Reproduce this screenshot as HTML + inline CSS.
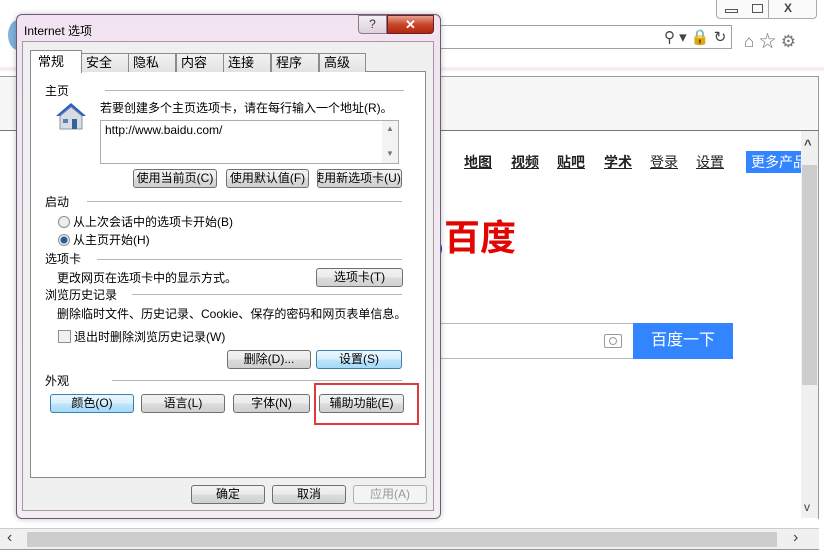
<!DOCTYPE html>
<html><head><meta charset="utf-8"><style>
*{box-sizing:border-box;margin:0;padding:0}
body{width:824px;height:555px;position:relative;overflow:hidden;background:#fff;font-family:"Liberation Sans","Noto Sans CJK SC",sans-serif;font-size:12px;color:#000}
.a{position:absolute}
.btn{position:absolute;height:19px;border:1px solid #707070;border-radius:3px;background:linear-gradient(#f2f2f2,#ebebeb 50%,#dcdcdc 50%,#d0d0d0);font-size:12px;text-align:center;line-height:17px;white-space:nowrap;overflow:hidden}
.blue{border-color:#3c7fb1;background:linear-gradient(#eaf6fd,#d9f0fc 50%,#bee6fd 50%,#a7d9f5)}
.tab{position:absolute;top:53px;height:19px;border:1px solid #898c95;border-bottom:none;background:linear-gradient(#f2f2f2,#e3e3e3);font-size:13px;padding-left:4px;line-height:18px}
.lbl{position:absolute;font-size:12px;white-space:nowrap}
.line{position:absolute;height:1px;background:#b5b5b5}
.nav{position:absolute;top:152px;font-size:14px;text-decoration:underline;color:#222;font-weight:bold}
</style></head><body>
<!-- browser chrome -->
<div class="a" style="left:716px;top:0;width:101px;height:19px;border:1px solid #aaa;border-top:none;border-radius:0 0 4px 4px;background:#fafafa"></div>
<div class="a" style="left:725px;top:9px;width:13px;height:4px;border:1px solid #555"></div>
<div class="a" style="left:752px;top:4px;width:11px;height:9px;border:1px solid #555"></div>
<div class="a" style="left:768px;top:0;width:1px;height:18px;background:#aaa"></div>
<div class="a" style="left:784px;top:1px;font-size:12px;color:#444;font-weight:bold">X</div>
<div class="a" style="left:440px;top:25px;width:292px;height:24px;border:1px solid #a0a0a0;background:#fff"></div>
<div class="a" style="left:664px;top:28px;font-size:15px;color:#444">⚲ ▾ 🔒 ↻</div>
<div class="a" style="left:744px;top:27px;font-size:17px;color:#777">⌂ ☆ ⚙</div>
<div class="a" style="left:0;top:66px;width:824px;height:6px;background:linear-gradient(#fff,#f2e6f0,#fff)"></div>
<div class="a" style="left:0;top:76px;width:819px;height:55px;background:#f7f7f7;border-top:1px solid #999;border-bottom:1px solid #777;border-right:1px solid #999"></div>
<div class="a" style="left:818px;top:131px;width:1px;height:388px;background:#999"></div>
<div class="a" style="left:801px;top:131px;width:17px;height:387px;background:#f0f0f0"></div>
<div class="a" style="left:802px;top:165px;width:15px;height:220px;background:#cdcdcd"></div>
<div class="a" style="left:804px;top:137px;font-size:13px;color:#444;font-weight:bold">^</div>
<div class="a" style="left:804px;top:500px;font-size:12px;color:#444">v</div>
<div class="a" style="left:0;top:528px;width:819px;height:22px;background:#f0f0f0;border-top:1px solid #ccc;border-bottom:1px solid #999"></div>
<div class="a" style="left:27px;top:532px;width:750px;height:15px;background:#cdcdcd"></div>
<div class="a" style="left:7px;top:529px;font-size:16px;color:#444">‹</div>
<div class="a" style="left:793px;top:529px;font-size:16px;color:#444">›</div>
<div class="nav" style="left:464px">地图</div>
<div class="nav" style="left:511px">视频</div>
<div class="nav" style="left:557px">贴吧</div>
<div class="nav" style="left:604px">学术</div>
<div class="nav" style="left:650px;font-weight:normal">登录</div>
<div class="nav" style="left:696px;font-weight:normal">设置</div>
<div class="a" style="left:746px;top:151px;width:55px;height:22px;background:#3385ff;color:#fff;font-size:14px;line-height:22px;padding-left:5px;overflow:hidden;white-space:nowrap">更多产品</div>
<div class="a" style="left:444px;top:216px;font-size:36px;font-weight:bold;color:#e10602;line-height:44px">百度</div>
<div class="a" style="left:434px;top:242px;width:8px;height:14px;border-radius:50%;background:#2932e1"></div>
<div class="a" style="left:438px;top:323px;width:196px;height:36px;border:1px solid #b8b8b8;border-left:none;border-right:none"></div>
<div class="a" style="left:604px;top:334px;width:18px;height:14px;border:1.5px solid #999;border-radius:2px"></div>
<div class="a" style="left:609px;top:337px;width:8px;height:8px;border:1.5px solid #999;border-radius:50%"></div>
<div class="a" style="left:633px;top:323px;width:100px;height:36px;background:#3385ff;color:#fff;font-size:16px;text-align:center;line-height:36px">百度一下</div>
<div class="a" style="left:8px;top:20px;width:20px;height:30px;border-radius:50%;background:#2d7fc1;opacity:.6"></div>
<!-- dialog -->
<div class="a" style="left:16px;top:14px;width:425px;height:505px;border:1px solid #6b5a73;border-radius:6px;background:linear-gradient(#f3e2f1,#f0e6ef 40px,#f2eef2);box-shadow:0 0 6px rgba(0,0,0,.25)"></div>
<div class="a" style="left:22px;top:41px;width:412px;height:470px;border:1px solid #a993a8;background:#f0f0f0"></div>
<div class="lbl" style="left:24px;top:22px;font-size:12px">Internet 选项</div>
<div class="a" style="left:358px;top:15px;width:29px;height:19px;border:1px solid #8a7a8a;border-radius:0 0 0 4px;background:linear-gradient(#f5eef5,#ddd0dc);text-align:center;font-size:12px;line-height:17px;color:#333">?</div>
<div class="a" style="left:387px;top:15px;width:47px;height:19px;border:1px solid #6b2020;border-radius:0 0 4px 0;background:linear-gradient(#e8a08e,#c8452c 50%,#b2260e);text-align:center;color:#fff;font-weight:bold;font-size:13px;line-height:17px">✕</div>
<div class="a" style="left:30px;top:71px;width:396px;height:407px;border:1px solid #898c95;background:#fff"></div>
<div class="tab" style="left:81px;width:48px">安全</div>
<div class="tab" style="left:128px;width:48px">隐私</div>
<div class="tab" style="left:176px;width:48px">内容</div>
<div class="tab" style="left:223px;width:48px">连接</div>
<div class="tab" style="left:271px;width:48px">程序</div>
<div class="tab" style="left:319px;width:47px">高级</div>
<div class="tab" style="left:30px;top:50px;width:52px;height:23px;background:#fff;line-height:22px;padding-left:7px">常规</div>
<div class="lbl" style="left:45px;top:82px">主页</div><div class="line" style="left:105px;top:90px;width:299px"></div>
<svg class="a" style="left:54px;top:101px" width="34" height="30" viewBox="0 0 34 30"><polygon points="2,15 17,2 32,15 28,15 17,6 6,15" fill="#2b5fc8"/><polygon points="6,15 17,6 28,15 28,28 6,28" fill="#d8dde4" stroke="#8a95a3"/><rect x="18" y="18" width="5" height="10" fill="#3a5f9e"/><rect x="9" y="18" width="5" height="4" fill="#5a7fb8"/></svg>
<div class="lbl" style="left:100px;top:99px">若要创建多个主页选项卡，请在每行输入一个地址(R)。</div>
<div class="a" style="left:100px;top:120px;width:299px;height:44px;border:1px solid #abadb3;background:#fff"></div>
<div class="lbl" style="left:105px;top:123px">http://www.baidu.com/</div>
<div class="a" style="left:382px;top:121px;width:16px;height:42px;background:#f3f3f3"></div>
<div class="lbl" style="left:386px;top:124px;font-size:8px;color:#777">▲</div><div class="lbl" style="left:386px;top:149px;font-size:8px;color:#777">▼</div>
<div class="btn" style="left:133px;top:169px;width:84px">使用当前页(C)</div>
<div class="btn" style="left:226px;top:169px;width:83px">使用默认值(F)</div>
<div class="btn" style="left:317px;top:169px;width:85px;text-indent:-6px">使用新选项卡(U)</div>
<div class="lbl" style="left:45px;top:193px">启动</div><div class="line" style="left:87px;top:201px;width:315px"></div>
<div class="a" style="left:58px;top:216px;width:12px;height:12px;border:1px solid #8e8f8f;border-radius:50%;background:#eee"></div>
<div class="lbl" style="left:73px;top:213px">从上次会话中的选项卡开始(B)</div>
<div class="a" style="left:58px;top:234px;width:12px;height:12px;border:1px solid #8e8f8f;border-radius:50%;background:radial-gradient(#1e5fa0 3px,#eee 4px)"></div>
<div class="lbl" style="left:73px;top:231px">从主页开始(H)</div>
<div class="lbl" style="left:45px;top:250px">选项卡</div><div class="line" style="left:97px;top:259px;width:305px"></div>
<div class="lbl" style="left:57px;top:269px">更改网页在选项卡中的显示方式。</div>
<div class="btn" style="left:316px;top:268px;width:87px">选项卡(T)</div>
<div class="lbl" style="left:45px;top:286px">浏览历史记录</div><div class="line" style="left:132px;top:294px;width:270px"></div>
<div class="lbl" style="left:57px;top:305px">删除临时文件、历史记录、Cookie、保存的密码和网页表单信息。</div>
<div class="a" style="left:58px;top:330px;width:13px;height:13px;border:1px solid #8e8f8f;background:#f0f0f0"></div>
<div class="lbl" style="left:74px;top:328px">退出时删除浏览历史记录(W)</div>
<div class="btn" style="left:227px;top:350px;width:84px">删除(D)...</div>
<div class="btn blue" style="left:316px;top:350px;width:86px">设置(S)</div>
<div class="lbl" style="left:45px;top:372px">外观</div><div class="line" style="left:112px;top:380px;width:290px"></div>
<div class="btn blue" style="left:50px;top:394px;width:84px">颜色(O)</div>
<div class="btn" style="left:141px;top:394px;width:84px">语言(L)</div>
<div class="btn" style="left:233px;top:394px;width:77px">字体(N)</div>
<div class="btn" style="left:319px;top:394px;width:85px">辅助功能(E)</div>
<div class="a" style="left:314px;top:383px;width:105px;height:42px;border:2px solid #e0393c"></div>
<div class="btn" style="left:191px;top:485px;width:74px">确定</div>
<div class="btn" style="left:272px;top:485px;width:74px">取消</div>
<div class="btn" style="left:353px;top:485px;width:74px;color:#999;border-color:#b0b0b0;background:#f4f4f4">应用(A)</div>
</body></html>
